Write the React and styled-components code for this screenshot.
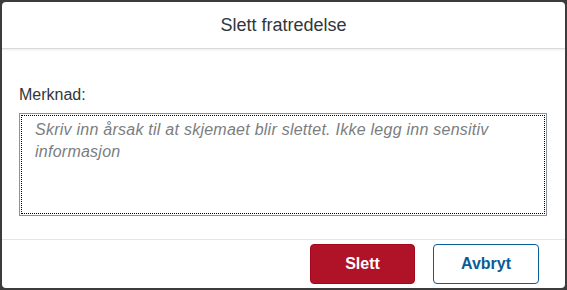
import React from 'react';
import styled, { createGlobalStyle } from 'styled-components';

const GlobalStyle = createGlobalStyle`
  html, body {
    margin: 0;
    padding: 0;
    background: #3c3c3c;
  }
  body {
    font-family: "Liberation Sans", Arial, sans-serif;
  }
`;

const Dialog = styled.div`
  margin: 2px;
  width: 563px;
  height: 286px;
  background: #fff;
  border-radius: 4px;
  display: flex;
  flex-direction: column;
  overflow: hidden;
`;

const Header = styled.header`
  height: 46px;
  flex: none;
  display: flex;
  align-items: center;
  justify-content: center;
  border-bottom: 1px solid #d9d9d9;
  box-shadow: 0 1px 2px rgba(0, 0, 0, 0.08);
  font-size: 18px;
  color: #32363a;
`;

const Content = styled.div`
  flex: 1;
  padding: 37px 18px 0 17px;
  display: flex;
  flex-direction: column;
`;

const Label = styled.label`
  font-size: 16px;
  line-height: 18px;
  color: #32363a;
  margin-bottom: 9px;
`;

const TextArea = styled.textarea`
  box-sizing: border-box;
  width: 100%;
  height: 103px;
  resize: none;
  border: 1px solid #89919a;
  border-radius: 0;
  outline: 1px dotted #000;
  outline-offset: -3px;
  padding: 5px 15px;
  font-family: inherit;
  font-size: 16px;
  line-height: 22px;
  letter-spacing: 0.25px;
  color: #32363a;
  background: #fff;

  &::placeholder {
    color: #7a7d80;
    font-style: italic;
  }
`;

const Footer = styled.footer`
  height: 48px;
  flex: none;
  border-top: 1px solid #e5e5e5;
  display: flex;
  align-items: center;
  justify-content: flex-end;
  gap: 18px;
  padding: 0 26px 0 0;
`;

const Button = styled.button`
  box-sizing: border-box;
  width: ${(p) => p.$width}px;
  height: 40px;
  border-radius: 4px;
  font-family: inherit;
  font-size: 16px;
  font-weight: bold;
  cursor: pointer;
  border: 1px solid ${(p) => (p.$danger ? '#a5081c' : '#0a5c96')};
  background: ${(p) => (p.$danger ? '#b01227' : '#fff')};
  color: ${(p) => (p.$danger ? '#fff' : '#0a5c96')};
`;

export default function App() {
  return (
    <>
      <GlobalStyle />
      <Dialog>
        <Header>Slett fratredelse</Header>
        <Content>
          <Label htmlFor="merknad">Merknad:</Label>
          <TextArea
            id="merknad"
            placeholder="Skriv inn årsak til at skjemaet blir slettet. Ikke legg inn sensitiv informasjon"
          />
        </Content>
        <Footer>
          <Button $danger $width={105}>Slett</Button>
          <Button $width={106}>Avbryt</Button>
        </Footer>
      </Dialog>
    </>
  );
}
